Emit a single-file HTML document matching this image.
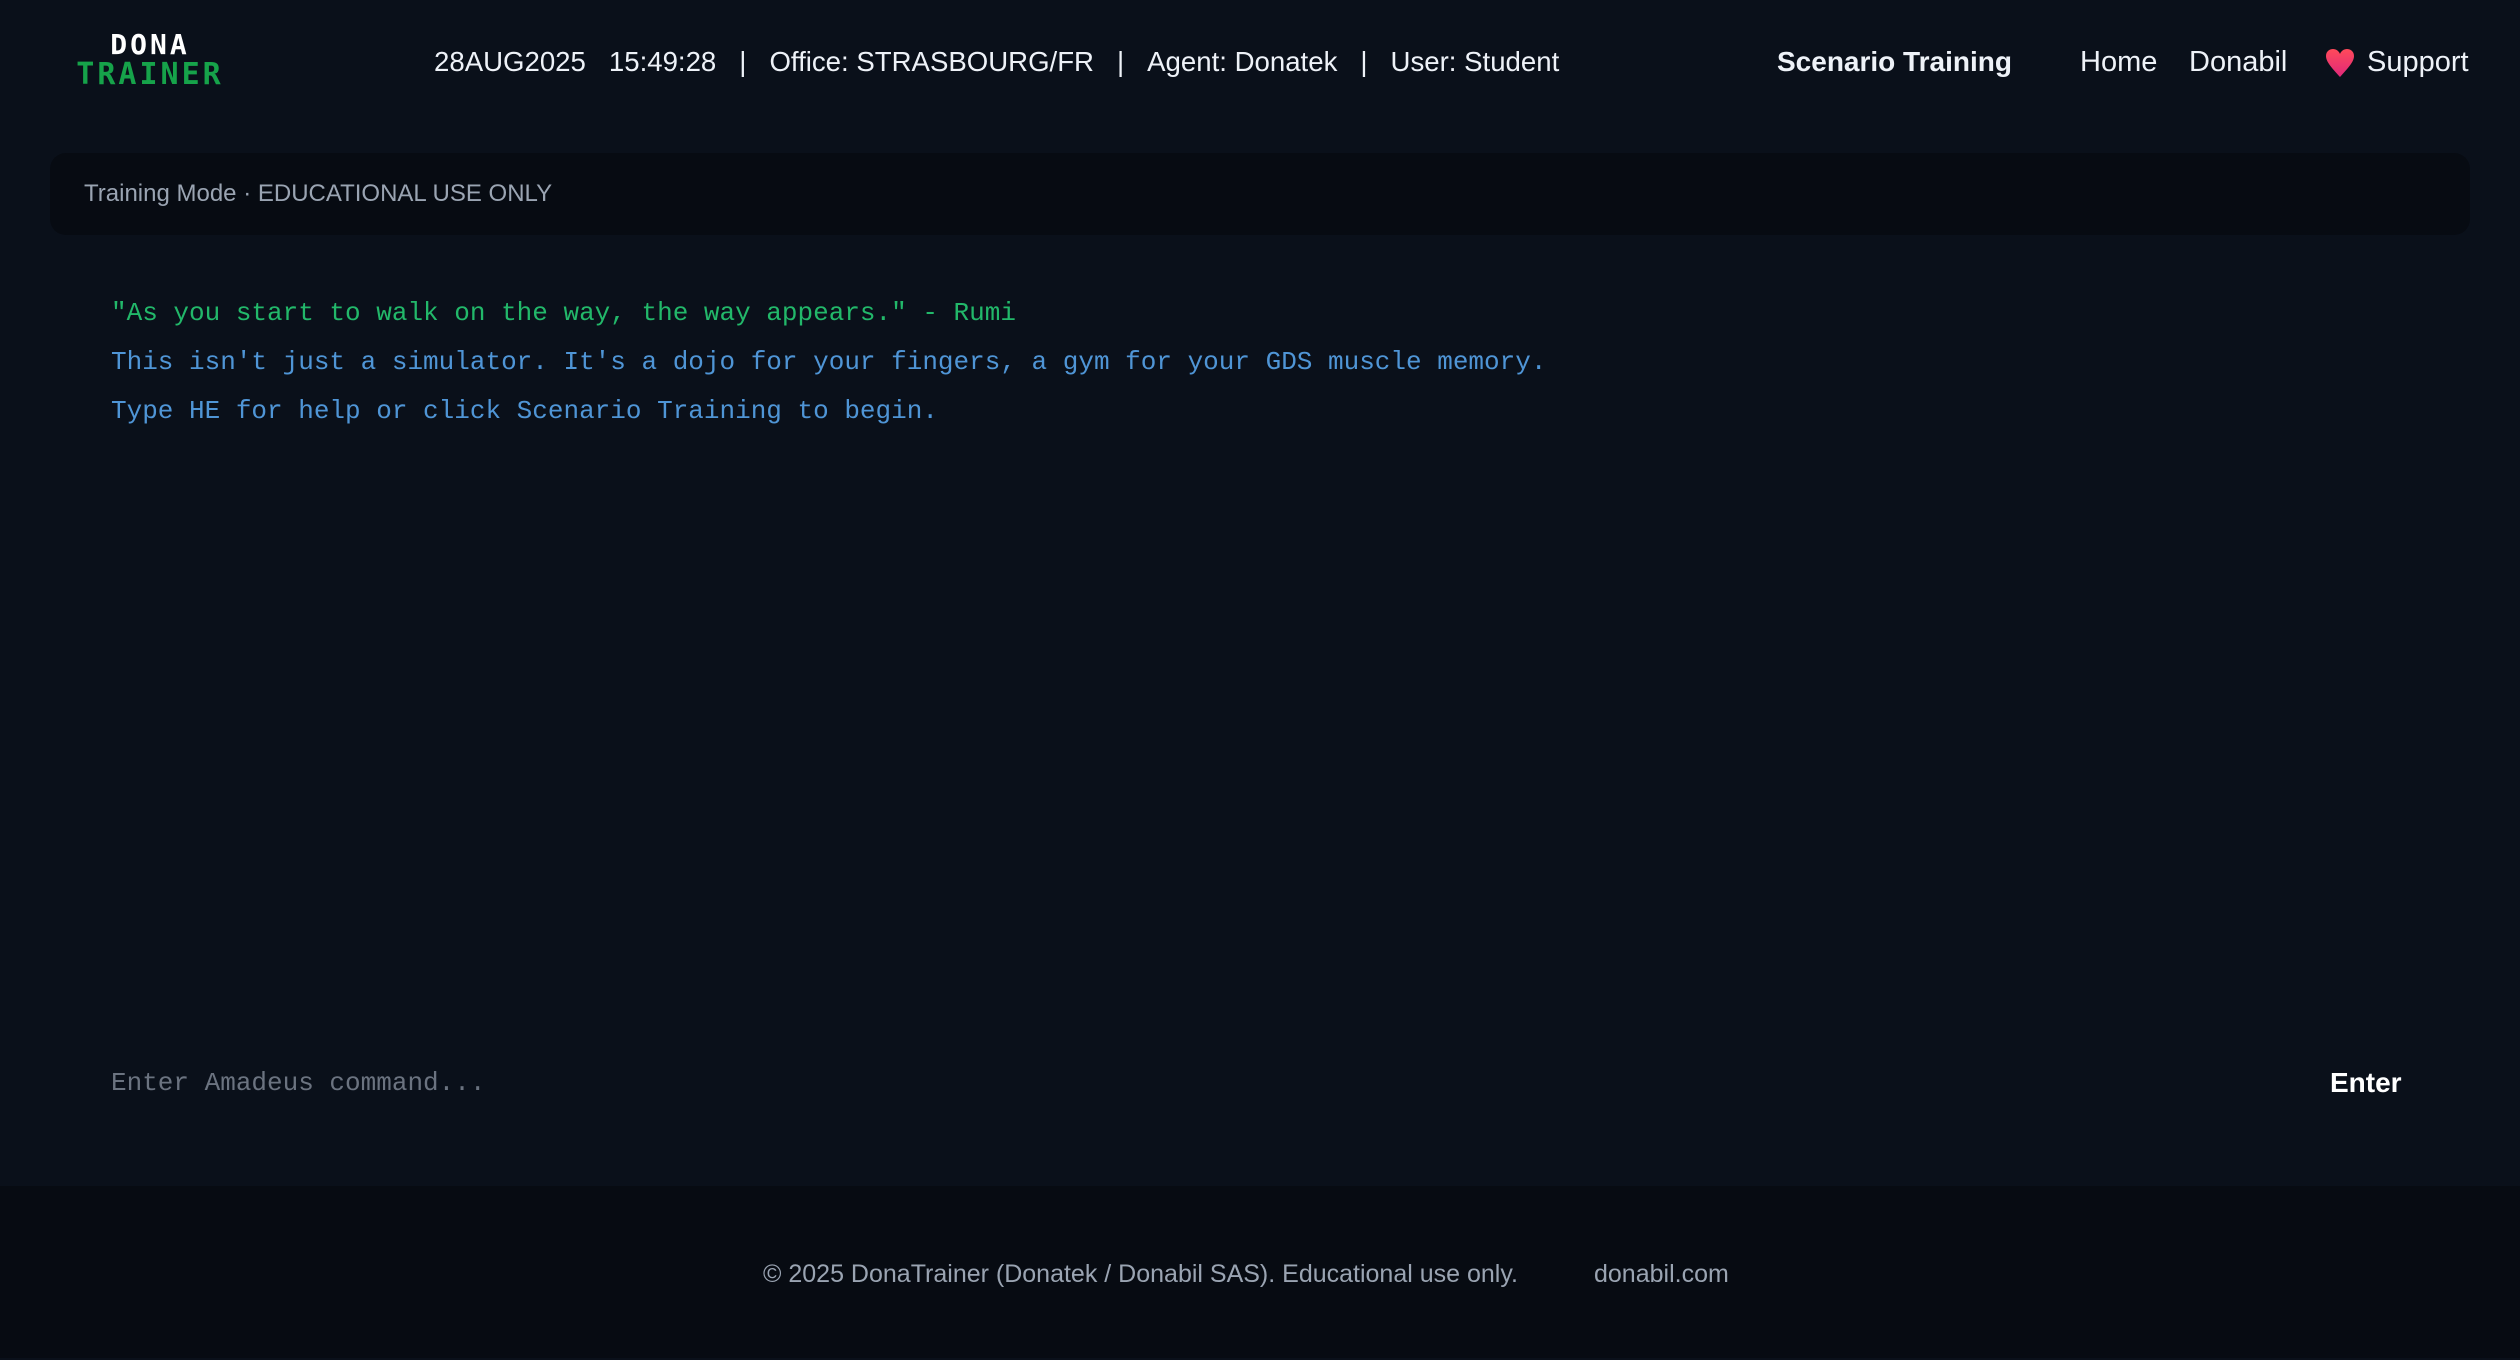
<!DOCTYPE html>
<html><head><meta charset="utf-8"><style>
*{margin:0;padding:0;box-sizing:border-box}
body{width:2520px;height:1360px;background:#0a101a;font-family:"Liberation Sans",sans-serif;position:relative;overflow:hidden;color:#e8edf5}
.abs{position:absolute;white-space:nowrap}
.logo{left:72px;width:156px;text-align:center;font-weight:bold;font-family:"DejaVu Sans Mono","Liberation Mono",monospace;letter-spacing:3px}
.hdr{top:43px;font-size:29px;line-height:38px;color:#eef2f8}
.bar{left:50px;top:153px;width:2420px;height:82px;background:#070b12;border-radius:16px}
.mono{font-family:"Liberation Mono",monospace;font-size:26px}
footer{position:absolute;left:0;top:1186px;width:2520px;height:172px;background:#070b12}
</style></head><body>
<div class="abs logo" style="top:28px;font-size:28px;color:#fff">DONA</div>
<div class="abs logo" style="top:57px;font-size:30px;color:#16a34a">TRAINER</div>
<div class="abs hdr" style="left:434px;font-size:27.6px;top:43px">28AUG2025&nbsp;&nbsp;&nbsp;15:49:28&nbsp;&nbsp;&nbsp;|&nbsp;&nbsp;&nbsp;Office: STRASBOURG/FR&nbsp;&nbsp;&nbsp;|&nbsp;&nbsp;&nbsp;Agent: Donatek&nbsp;&nbsp;&nbsp;|&nbsp;&nbsp;&nbsp;User: Student</div>
<div class="abs hdr" style="left:1777px;font-weight:bold;font-size:28px">Scenario Training</div>
<div class="abs hdr" style="left:2080px">Home</div>
<div class="abs hdr" style="left:2189px">Donabil</div>
<svg class="abs" style="left:2324px;top:48px" width="32" height="30" viewBox="0 0 32 30"><defs><linearGradient id="g" x1="0" y1="0" x2="0" y2="1"><stop offset="0" stop-color="#ff4a5a"/><stop offset="1" stop-color="#e0287a"/></linearGradient></defs><path d="M16 29 C8 20 2 14 2 8 C2 3 6 1 9 1 C12 1 15 3 16 6 C17 3 20 1 23 1 C26 1 30 3 30 8 C30 14 24 20 16 29Z" fill="url(#g)"/></svg>
<div class="abs hdr" style="left:2367px">Support</div>
<div class="abs bar"></div>
<div class="abs" style="left:84px;top:180px;font-size:24px;color:#9aa4b2">Training Mode · EDUCATIONAL USE ONLY</div>
<div class="abs mono" style="left:111px;top:298px;color:#22b86a">"As you start to walk on the way, the way appears." - Rumi</div>
<div class="abs mono" style="left:111px;top:347px;color:#4f95d6">This isn't just a simulator. It's a dojo for your fingers, a gym for your GDS muscle memory.</div>
<div class="abs mono" style="left:111px;top:396px;color:#4f95d6">Type HE for help or click Scenario Training to begin.</div>
<div class="abs mono" style="left:111px;top:1068px;color:#6b7380">Enter Amadeus command...</div>
<div class="abs" style="left:2330px;top:1067px;font-size:28px;font-weight:bold;color:#fff">Enter</div>
<footer></footer>
<div class="abs" style="left:763px;top:1260px;font-size:25px;color:#9aa4b2">© 2025 DonaTrainer (Donatek / Donabil SAS). Educational use only.</div>
<div class="abs" style="left:1594px;top:1260px;font-size:25px;color:#9aa4b2">donabil.com</div>
</body></html>
